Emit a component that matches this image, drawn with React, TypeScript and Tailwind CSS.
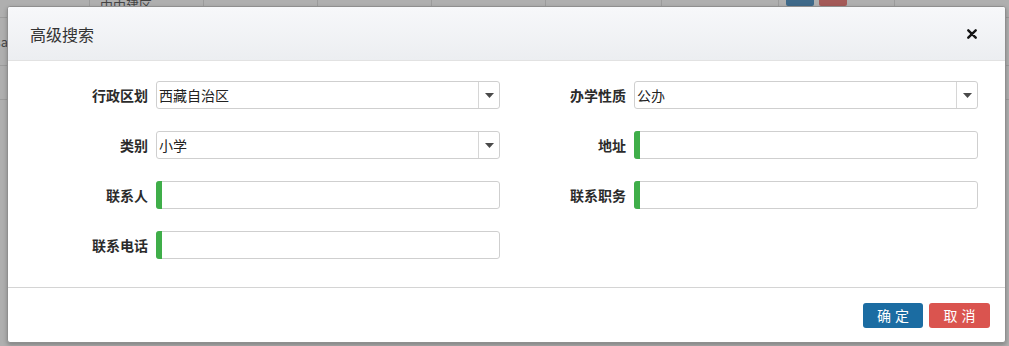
import { ReactNode } from "react"

const font = { fontFamily: '"Noto Sans CJK SC", "Liberation Sans", sans-serif' }

function Caret() {
  return (
    <svg width="9" height="5" viewBox="0 0 9 5">
      <path d="M0 0 H9 L4.5 5 Z" fill="#4a4a4a" />
    </svg>
  )
}

function SelectBox({ value }: { value: string }) {
  return (
    <div className="flex h-[28px] w-[344px] items-stretch rounded-[3px] border border-[#cfcfcf] bg-white">
      <div className="flex flex-1 items-center pl-[2px] text-[14px] text-[#222]">{value}</div>
      <div className="flex w-[21px] items-center justify-center border-l border-[#d6d6d6]">
        <Caret />
      </div>
    </div>
  )
}

function TextBox() {
  return (
    <div className="flex h-[28px] w-[344px] rounded-[3px] border border-[#cfcfcf] bg-white">
      <div className="-my-px -ml-px w-[6px] rounded-l-[3px] bg-[#3fae49]" />
    </div>
  )
}

function Field({ label, width, children }: { label: string; width: string; children: ReactNode }) {
  return (
    <div className="flex items-center gap-2">
      <div className={`${width} text-right text-[14px] font-bold text-[#2b2b2b]`}>{label}</div>
      {children}
    </div>
  )
}

export default function App() {
  return (
    <div className="relative h-[346px] w-[1009px] overflow-hidden bg-[#afafaf]" style={font}>
      {/* page behind the overlay */}
      <div className="flex h-[18px] border-b border-[#9c9c9c]">
        <div className="w-[90px] border-r border-[#9c9c9c]" />
        <div className="w-[114px] border-r border-[#9c9c9c] pl-[10px] text-[13px] leading-[10px] text-[#444]">中中建区</div>
        <div className="w-[114px] border-r border-[#9c9c9c]" />
        <div className="w-[114px] border-r border-[#9c9c9c]" />
        <div className="w-[114px] border-r border-[#9c9c9c]" />
        <div className="w-[116px] border-r border-[#9c9c9c]" />
        <div className="w-[117px] border-r border-[#9c9c9c]" />
        <div className="flex w-[116px] gap-[5px] border-r border-[#9c9c9c] pl-[7px]">
          <div className="h-[6px] w-[28px] rounded-b-[2px] bg-[#3f6a8a]" />
          <div className="h-[6px] w-[28px] rounded-b-[2px] bg-[#a45a58]" />
        </div>
      </div>
      <div className="flex h-[48px] border-b border-[#9c9c9c] pt-[14px] text-[13px] text-[#444]">
        <div className="flex w-[8px] justify-end overflow-hidden whitespace-nowrap">sa</div>
      </div>
      <div className="h-[34px] border-b border-[#9c9c9c]" />

      {/* modal */}
      <div className="absolute left-[7px] top-[6px] flex h-[337px] w-[999px] flex-col overflow-hidden rounded-[3px] border border-[#8f8f8f] bg-white shadow-[0_2px_4px_rgba(0,0,0,0.25)]">
        <div className="flex h-[54px] shrink-0 items-center justify-between border-b border-[#e2e2e2] bg-gradient-to-b from-[#f7f8fa] to-[#eceef1] pl-[22px] pr-[28px]">
          <div className="text-[16px] text-[#333]">高级搜索</div>
          <svg width="10" height="10" viewBox="0 0 10 10">
            <path d="M1.3 1.3 L8.7 8.7 M8.7 1.3 L1.3 8.7" stroke="#151515" strokeWidth="2.4" strokeLinecap="round" />
          </svg>
        </div>

        <div className="flex flex-1 flex-col gap-[22px] pt-[20px]">
          <div className="flex gap-2">
            <Field label="行政区划" width="w-[140px]"><SelectBox value="西藏自治区" /></Field>
            <Field label="办学性质" width="w-[118px]"><SelectBox value="公办" /></Field>
          </div>
          <div className="flex gap-2">
            <Field label="类别" width="w-[140px]"><SelectBox value="小学" /></Field>
            <Field label="地址" width="w-[118px]"><TextBox /></Field>
          </div>
          <div className="flex gap-2">
            <Field label="联系人" width="w-[140px]"><TextBox /></Field>
            <Field label="联系职务" width="w-[118px]"><TextBox /></Field>
          </div>
          <div className="flex gap-2">
            <Field label="联系电话" width="w-[140px]"><TextBox /></Field>
          </div>
        </div>

        <div className="flex h-[55px] shrink-0 items-center justify-end gap-[6px] border-t border-[#d4d4d4] pr-[15px]">
          <button className="h-[25px] w-[60px] rounded-[3px] bg-[#1b6ca2] text-[14px] tracking-[0.3em] text-white indent-[0.3em]">确定</button>
          <button className="h-[25px] w-[61px] rounded-[3px] bg-[#da544f] text-[14px] tracking-[0.3em] text-white indent-[0.3em]">取消</button>
        </div>
      </div>
    </div>
  )
}
